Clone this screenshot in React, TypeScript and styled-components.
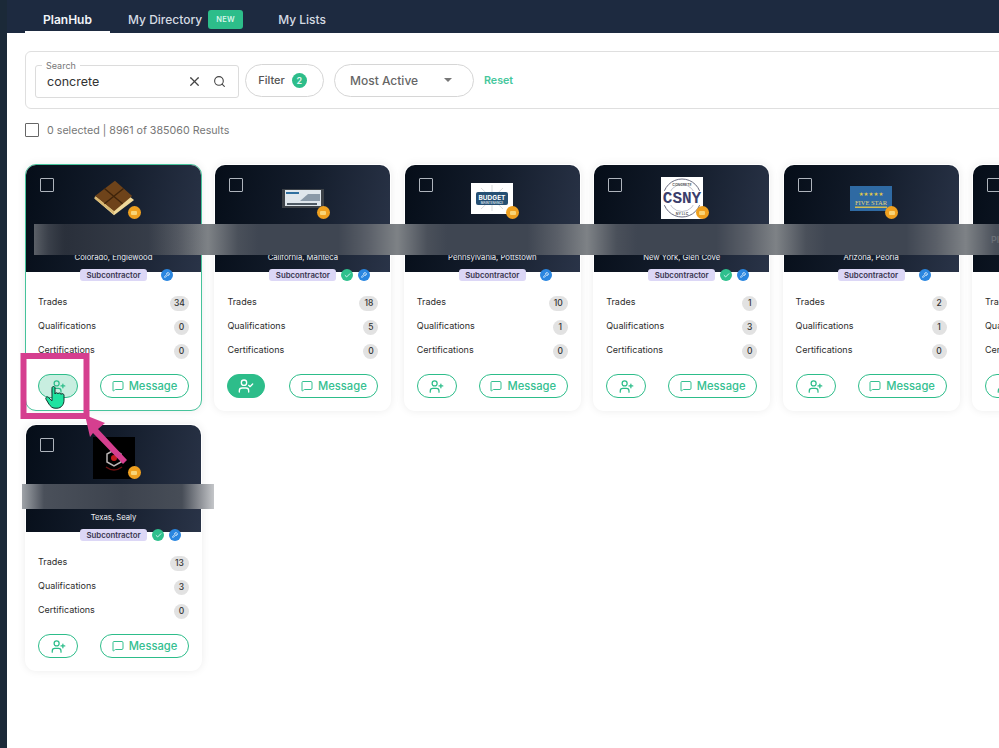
import React from "react"
import styled, { createGlobalStyle } from "styled-components"
import { MessageSquare, Search, UserCheck, UserPlus, X, Check, Wrench } from "lucide-react"

const Global = createGlobalStyle`
  html, body {
    margin: 0;
    padding: 0;
    background: #fff;
    font-family: Inter, "Liberation Sans", sans-serif;
  }
`

const Page = styled.div`
  position: relative;
  display: flex;
  width: 999px;
  height: 748px;
  overflow: hidden;
  background: #fff;
`
const Sidebar = styled.div`
  flex: 0 0 7px;
  background: #1b2938;
`
const Main = styled.div`
  flex: 1;
  min-width: 0;
`
const TopBar = styled.div`
  display: flex;
  align-items: stretch;
  height: 33px;
  padding-left: 18px;
  background: #1d2a40;
`
const Tab = styled.div<{ $active?: boolean }>`
  display: flex;
  align-items: center;
  justify-content: center;
  gap: 6px;
  height: 33px;
  padding-top: 8px;
  box-sizing: border-box;
  width: ${(p) => (p.$active ? "85px" : "auto")};
  margin-right: ${(p) => (p.$active ? "18px" : "35px")};
  border-bottom: 2px solid ${(p) => (p.$active ? "#fff" : "transparent")};
  color: ${(p) => (p.$active ? "#f2f5f8" : "#d5dbe3")};
  font-size: 12px;
  font-weight: ${(p) => (p.$active ? 600 : 500)};
`
const NewTag = styled.span`
  display: inline-flex;
  align-items: center;
  justify-content: center;
  width: 35px;
  height: 19px;
  border-radius: 3px;
  background: #2dbd8a;
  color: #d8f5ea;
  font-size: 7.5px;
  font-weight: 600;
  letter-spacing: 0.3px;
`
const Content = styled.div`
  padding: 18px 0 0 18px;
`
const FilterPanel = styled.div`
  display: flex;
  align-items: center;
  box-sizing: border-box;
  width: 1100px;
  height: 58px;
  padding-left: 9px;
  border: 1px solid #dfdfdf;
  border-radius: 6px;
`
const SearchField = styled.fieldset`
  display: flex;
  align-items: center;
  box-sizing: border-box;
  flex: 0 0 204px;
  min-width: 0;
  height: 35px;
  margin: 0;
  padding: 0 12px 2px 11px;
  border: 1px solid #dcdcdc;
  border-radius: 3px;
  legend {
    margin-left: -5px;
    padding: 0 4px;
    color: #777;
    font-size: 9px;
    line-height: 6px;
  }
  input {
    flex: 1;
    width: 100px;
    min-width: 0;
    border: 0;
    outline: 0;
    padding: 0;
    background: transparent;
    color: #333;
    font: 400 12.5px Inter, sans-serif;
  }
`
const FieldIcon = styled.span<{ $gap?: number }>`
  display: inline-flex;
  margin-left: ${(p) => p.$gap ?? 0}px;
  color: #444;
`
const FilterButton = styled.div`
  display: flex;
  align-items: center;
  justify-content: center;
  gap: 7px;
  box-sizing: border-box;
  width: 79px;
  height: 33px;
  margin-left: 6px;
  padding-right: 4px;
  border: 1px solid #d6d6d6;
  border-radius: 17px;
  color: #555;
  font-size: 11px;
  font-weight: 500;
`
const CountDot = styled.span`
  display: inline-flex;
  align-items: center;
  justify-content: center;
  width: 15px;
  height: 15px;
  border-radius: 50%;
  background: #2dbd8a;
  color: #e6f8f1;
  font-size: 9px;
  font-weight: 600;
`
const SortSelect = styled.div`
  display: flex;
  align-items: center;
  box-sizing: border-box;
  width: 140px;
  height: 33px;
  margin-left: 10px;
  padding-left: 15px;
  border: 1px solid #d6d6d6;
  border-radius: 17px;
  color: #666;
  font-size: 12px;
  font-weight: 500;
  &::after {
    content: "";
    margin-left: 26px;
    border-left: 4px solid transparent;
    border-right: 4px solid transparent;
    border-top: 4px solid #777;
  }
`
const ResetLink = styled.span`
  margin-left: 10px;
  color: #45c79c;
  font-size: 10.7px;
  font-weight: 600;
`
const ResultsRow = styled.div`
  display: flex;
  align-items: center;
  gap: 8px;
  height: 14px;
  margin-top: 14px;
  color: #777;
  font-size: 10.7px;
`
const Box = styled.span<{ $light?: boolean }>`
  display: block;
  box-sizing: border-box;
  width: 14px;
  height: 14px;
  border: 1px solid ${(p) => (p.$light ? "#aeb4bc" : "#666")};
  border-radius: 1px;
`
const CardGrid = styled.div`
  display: grid;
  grid-template-columns: repeat(6, 177px);
  grid-auto-rows: 247px;
  column-gap: 12.4px;
  row-gap: 13px;
  width: 1200px;
  margin-top: 27px;
`
const Card = styled.div<{ $selected?: boolean }>`
  display: flex;
  flex-direction: column;
  box-sizing: border-box;
  border: 1px solid ${(p) => (p.$selected ? "#46c39b" : "transparent")};
  border-radius: 11px;
  background: #fff;
  box-shadow: 0 0 8px rgba(0, 0, 0, 0.08);
  overflow: hidden;
`
const CardHead = styled.div`
  position: relative;
  display: flex;
  flex-direction: column;
  align-items: center;
  flex: 0 0 108px;
  box-sizing: border-box;
  margin: -1px -1px 0;
  padding-top: 13px;
  background: linear-gradient(100deg, #050d18 0%, #141d2c 50%, #2a3448 100%);
  ${Box} {
    position: absolute;
    top: 14px;
    left: 15px;
  }
`
const LogoBox = styled.div`
  position: relative;
  display: flex;
  align-items: center;
  justify-content: center;
  width: 42px;
  height: 42px;
`
const Medal = styled.span`
  position: absolute;
  right: -6px;
  bottom: 0;
  display: flex;
  align-items: center;
  justify-content: center;
  width: 13px;
  height: 13px;
  border-radius: 50%;
  background: #efa01f;
  &::after {
    content: "";
    width: 6px;
    height: 4px;
    border-radius: 1px;
    background: #f8d477;
  }
`
const Location = styled.div`
  margin-top: 34px;
  color: #eef0f4;
  font-size: 7.7px;
  line-height: 10px;
  white-space: nowrap;
`
const BadgeRow = styled.div`
  position: relative;
  display: flex;
  align-items: center;
  height: 12px;
  margin: -3px 0 0 54px;
`
const TypeBadge = styled.span`
  display: flex;
  align-items: center;
  justify-content: center;
  width: 67px;
  height: 12px;
  border-radius: 3px;
  background: #dcd7f6;
  color: #3a3650;
  font-size: 7.8px;
  font-weight: 600;
`
const RoundIcon = styled.span<{ $color: string; $gap: number }>`
  display: flex;
  align-items: center;
  justify-content: center;
  width: 12px;
  height: 12px;
  margin-left: ${(p) => p.$gap}px;
  border-radius: 50%;
  background: ${(p) => p.$color};
  color: #e9f5ff;
`
const Stats = styled.div`
  display: flex;
  flex-direction: column;
  gap: 5px;
  margin-top: 11px;
  padding: 0 12px;
`
const StatRow = styled.div`
  display: flex;
  align-items: center;
  justify-content: space-between;
  height: 19px;
  color: #2c2c2c;
  font-size: 9px;
`
const Count = styled.span`
  display: inline-flex;
  align-items: center;
  justify-content: center;
  min-width: 15px;
  height: 15px;
  padding: 0 ${(p: { $wide?: boolean }) => (p.$wide ? "2px" : "0")};
  margin-top: 3px;
  border-radius: 8px;
  background: #e2e2e2;
  color: #333;
  font-size: 8.5px;
  font-weight: 500;
`
const Actions = styled.div`
  display: flex;
  align-items: center;
  justify-content: space-between;
  margin-top: 15px;
  padding: 0 12px;
`
const FollowButton = styled.div<{ $state?: "hover" | "done" }>`
  display: flex;
  align-items: center;
  justify-content: center;
  box-sizing: border-box;
  width: ${(p) => (p.$state === "done" ? "38px" : "40px")};
  height: 24px;
  border: 1px solid #2dbd8a;
  border-radius: 12px;
  background: ${(p) => (p.$state === "hover" ? "#c8eee0" : p.$state === "done" ? "#2dbd8a" : "#fff")};
  color: ${(p) => (p.$state === "done" ? "#fff" : "#2dbd8a")};
`
const MessageButton = styled.div`
  display: flex;
  align-items: center;
  justify-content: center;
  gap: 5px;
  box-sizing: border-box;
  width: 89px;
  height: 24px;
  border: 1px solid #2dbd8a;
  border-radius: 12px;
  color: #35c091;
  font-size: 11.2px;
  font-weight: 500;
`
// blurred out company names
const BlurBand = styled.div`
  position: absolute;
  top: 224px;
  left: 34px;
  width: 965px;
  height: 31px;
  padding-left: 957px;
  box-sizing: border-box;
  color: #6b7077;
  font-size: 9px;
  font-weight: 600;
  line-height: 31px;
  background-image:
    linear-gradient(90deg, rgba(20, 25, 35, 0.1) 0, rgba(20, 25, 35, 0.5) 30px, rgba(20, 25, 35, 0) 170px),
    linear-gradient(
      90deg,
      #7e8286 0,
      #4a505a 30px,
      #3f4652 50px,
      #3f4652 130px,
      #5a5f68 160px,
      #7e8286 189.4px
    );
  background-size: 100% 100%, 189.4px 100%;
  background-position: 0 0, 174px 0;
`
const BlurBandSmall = styled.div`
  position: absolute;
  top: 484px;
  left: 22px;
  width: 192px;
  height: 25px;
  background: linear-gradient(
    90deg,
    #9fa3a8 0,
    #4a505a 22px,
    #3d434e 100px,
    #474d57 160px,
    #8d9096 178px,
    #c4c6c9 192px
  );
`
const Annotation = styled.svg`
  position: absolute;
  top: 0;
  left: 0;
  pointer-events: none;
`

const PinkArrow = () => (
  <Annotation width="999" height="748" viewBox="0 0 999 748">
    <rect x="23.5" y="356" width="63" height="60" fill="none" stroke="#d53f8f" strokeWidth="6" />
    <path d="M85 415 L105 423 L98 429 L127 460 L123 464 L93 433 L90 437 Z" fill="#d53f8f" />
    <path
      d="M52 388c0-2 3-2 3 0v6c0-1.600 3-1.600 3 0 0-1.400 3-1.400 3 .4 0-1.200 3-1 3 .8v5c0 4-2.500 8-7 8h-2c-3 0-4.500-2-6-4l-3-5c-1-1.800 1.200-3.200 2.600-1.600l3.400 3.200z"
      fill="#1fe3a0"
      stroke="#12302a"
      strokeWidth="1"
    />
  </Annotation>
)

const ChocolateLogo = () => (
  <svg width="44" height="38" viewBox="0 0 44 38">
    <path d="M1 19 L22 37 L43 21 L23 5 Z" fill="#f0d99a" />
    <path d="M2 17 L23 1 L41 17 L22 33 Z" fill="#6e431a" />
    <path d="M2 17 L22 33 L22 36 L2 20 Z" fill="#d9b873" />
    <path d="M12 9 L31 25 M12 25 L32 9" stroke="#3f240b" strokeWidth="1.500" fill="none" />
  </svg>
)
const CardLogo = () => (
  <svg width="42" height="19" viewBox="0 0 42 19">
    <rect width="42" height="19" fill="#3d4248" />
    <rect x="3" y="1" width="36" height="16" fill="#dfe6ec" />
    <path d="M18 12 L26 5 L38 5 L38 12 Z" fill="#8a99a8" />
    <rect x="4" y="3" width="13" height="2" fill="#2f6f9f" />
    <rect x="5" y="14" width="30" height="2" fill="#4f5a64" />
  </svg>
)
const BudgetLogo = () => (
  <svg width="42" height="31" viewBox="0 0 42 31">
    <rect width="42" height="31" fill="#fff" />
    <path d="M21 2 V28 M10 5 L32 26 M32 5 L10 26" stroke="#c9cbcc" strokeWidth="0.7" />
    <rect x="5" y="9" width="32" height="13" rx="2" fill="#254f73" />
    <text x="21" y="16.500" textAnchor="middle" fontSize="6.500" fontWeight="700" fill="#fff" fontFamily="Inter">BUDGET</text>
    <text x="21" y="21" textAnchor="middle" fontSize="3" fontWeight="600" fill="#dfe7ee" fontFamily="Inter">MAINTENANCE</text>
  </svg>
)
const CsnyLogo = () => (
  <svg width="42" height="42" viewBox="0 0 42 42">
    <rect width="42" height="42" fill="#fff" />
    <circle cx="21" cy="21" r="19" fill="none" stroke="#6a6c80" strokeWidth="1" />
    <circle cx="21" cy="21" r="13.500" fill="none" stroke="#9a9cac" strokeWidth="0.6" />
    <rect x="0" y="14" width="42" height="14" fill="#fff" />
    <text x="21" y="9" textAnchor="middle" fontSize="3.500" fontWeight="600" fill="#555" fontFamily="Inter">CONCRETE</text>
    <text x="21" y="26" textAnchor="middle" fontSize="16" fontWeight="700" fill="#3b3e6b" fontFamily="Liberation Mono">CSNY</text>
    <text x="21" y="38" textAnchor="middle" fontSize="3.500" fontWeight="600" fill="#444" fontFamily="Inter">NY LLC</text>
  </svg>
)
const FiveStarLogo = () => (
  <svg width="42" height="25" viewBox="0 0 42 25">
    <rect width="42" height="25" fill="#2f6aa3" />
    <text x="21" y="9.500" textAnchor="middle" fontSize="5.500" fill="#e2c94a" fontFamily="DejaVu Sans">★★★★★</text>
    <text x="21" y="18.500" textAnchor="middle" fontSize="6.500" fill="#e5d37a" fontFamily="Liberation Serif">FIVE STAR</text>
    <rect x="5" y="20.500" width="32" height="1.500" fill="#d4bd53" />
  </svg>
)
const HexLogo = () => (
  <svg width="42" height="42" viewBox="0 0 42 42">
    <rect width="42" height="42" fill="#000" />
    <path d="M21 13 L28 17 L28 25 L21 29 L14 25 L14 17 Z" fill="none" stroke="#b9b4b4" strokeWidth="1.500" />
    <circle cx="21" cy="21" r="3" fill="#c01a1a" />
    <path d="M13 30 Q21 36 29 30" fill="none" stroke="#6d1010" strokeWidth="1.500" />
  </svg>
)

type Company = {
  logo?: React.ReactNode
  location: string
  verified?: boolean
  trades: number
  quals: number
  certs: number
  selected?: boolean
  follow?: "hover" | "done"
}

const companies: Company[] = [
  { logo: <ChocolateLogo />, location: "Colorado, Englewood", trades: 34, quals: 0, certs: 0, selected: true, follow: "hover" },
  { logo: <CardLogo />, location: "California, Manteca", verified: true, trades: 18, quals: 5, certs: 0, follow: "done" },
  { logo: <BudgetLogo />, location: "Pennsylvania, Pottstown", trades: 10, quals: 1, certs: 0 },
  { logo: <CsnyLogo />, location: "New York, Glen Cove", verified: true, trades: 1, quals: 3, certs: 0 },
  { logo: <FiveStarLogo />, location: "Arizona, Peoria", trades: 2, quals: 1, certs: 0 },
  { location: "", trades: 4, quals: 0, certs: 0 },
  { logo: <HexLogo />, location: "Texas, Sealy", verified: true, trades: 13, quals: 3, certs: 0 },
]

const CompanyCard = ({ company }: { company: Company }) => (
  <Card $selected={company.selected}>
    <CardHead>
      <Box $light />
      <LogoBox>
        {company.logo}
        {company.logo && <Medal />}
      </LogoBox>
      <Location>{company.location}</Location>
    </CardHead>
    <BadgeRow>
      <TypeBadge>Subcontractor</TypeBadge>
      {company.verified && (
        <RoundIcon $color="#2fc08d" $gap={5}>
          <Check size={7} strokeWidth={3} />
        </RoundIcon>
      )}
      <RoundIcon $color="#2a86e0" $gap={company.verified ? 5 : 14}>
        <Wrench size={6} strokeWidth={3} />
      </RoundIcon>
    </BadgeRow>
    <Stats>
      <StatRow>
        Trades <Count $wide={company.trades > 9}>{company.trades}</Count>
      </StatRow>
      <StatRow>
        Qualifications <Count>{company.quals}</Count>
      </StatRow>
      <StatRow>
        Certifications <Count>{company.certs}</Count>
      </StatRow>
    </Stats>
    <Actions>
      <FollowButton $state={company.follow}>
        {company.follow === "done" ? <UserCheck size={16} /> : <UserPlus size={15} />}
      </FollowButton>
      <MessageButton>
        <MessageSquare size={12} />
        Message
      </MessageButton>
    </Actions>
  </Card>
)

export default function App() {
  return (
    <Page>
      <Global />
      <Sidebar />
      <Main>
        <TopBar>
          <Tab $active>PlanHub</Tab>
          <Tab>
            My Directory <NewTag>NEW</NewTag>
          </Tab>
          <Tab>My Lists</Tab>
        </TopBar>
        <Content>
          <FilterPanel>
            <SearchField>
              <legend>Search</legend>
              <input value="concrete" readOnly />
              <FieldIcon>
                <X size={15} />
              </FieldIcon>
              <FieldIcon $gap={11}>
                <Search size={13} />
              </FieldIcon>
            </SearchField>
            <FilterButton>
              Filter <CountDot>2</CountDot>
            </FilterButton>
            <SortSelect>Most Active</SortSelect>
            <ResetLink>Reset</ResetLink>
          </FilterPanel>
          <ResultsRow>
            <Box />
            0 selected | 8961 of 385060 Results
          </ResultsRow>
          <CardGrid>
            {companies.map((c, i) => (
              <CompanyCard key={i} company={c} />
            ))}
          </CardGrid>
        </Content>
      </Main>
      <BlurBand>Pl</BlurBand>
      <BlurBandSmall />
      <PinkArrow />
    </Page>
  )
}
